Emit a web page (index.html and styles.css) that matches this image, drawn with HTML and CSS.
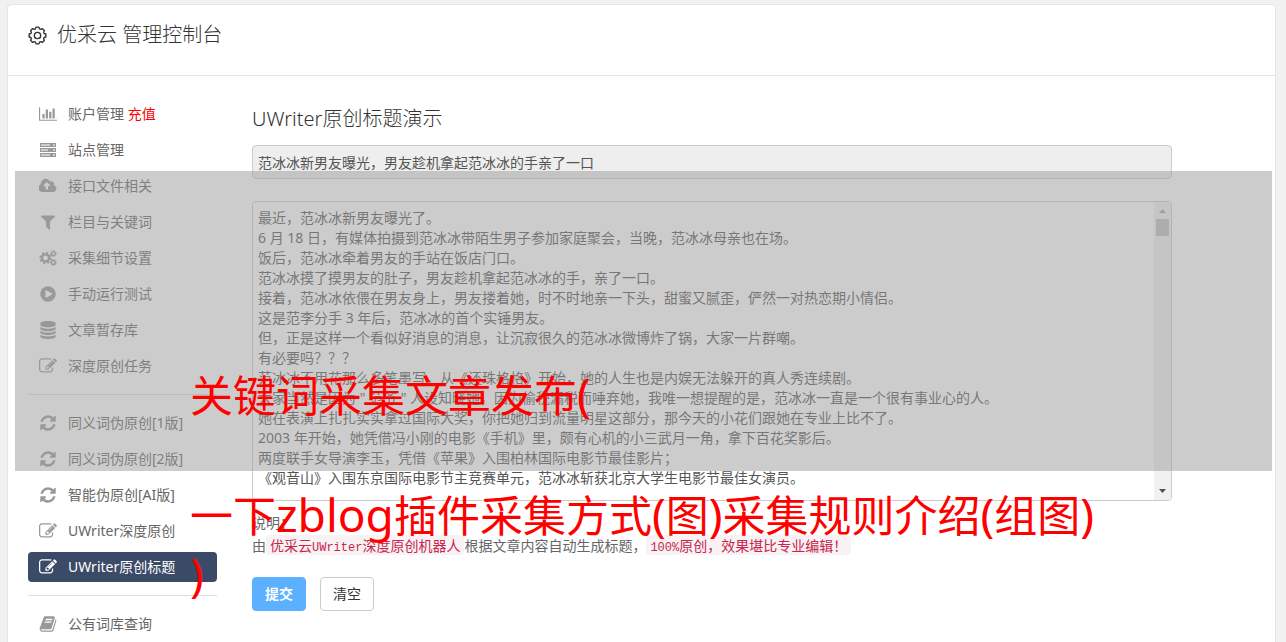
FILE: index.html
```html
<!DOCTYPE html>
<html lang="zh-CN">
<head>
    <meta charset="UTF-8">
    <meta name="viewport" content="width=device-width, initial-scale=1.0">
    <title>优采云 管理控制台</title>
    <link rel="stylesheet" href="styles.css">
</head>
<body>
    <!-- Iconos compartidos -->
    <svg class="sprite" aria-hidden="true">
        <symbol id="gear" viewBox="-9 -9 18 18">
            <path d="M7.9-1.4L7.9 1.4 6.3 1.9 5.8 3.1 6.55 4.6 4.6 6.55 3.1 5.8 1.9 6.3 1.4 7.9-1.4 7.9-1.9 6.3-3.1 5.8-4.6 6.55-6.55 4.6-5.8 3.1-6.3 1.9-7.9 1.4-7.9-1.4-6.3-1.9-5.8-3.1-6.55-4.6-4.6-6.55-3.1-5.8-1.9-6.3-1.4-7.9 1.4-7.9 1.9-6.3 3.1-5.8 4.6-6.55 6.55-4.6 5.8-3.1 6.3-1.9Z" fill="none" stroke="currentColor" stroke-width="1.3" stroke-linejoin="round"/>
            <circle r="3" fill="none" stroke="currentColor" stroke-width="1.3"/>
        </symbol>
        <symbol id="chart" viewBox="0 0 2048 1792"><path d="M640 896v512h-256v-512h256zm384-512v1024h-256v-1024h256zm1024 1152v128h-2048v-1536h128v1408h1920zm-640-896v768h-256v-768h256zm384-384v1152h-256v-1152h256z"/></symbol>
        <symbol id="server" viewBox="0 0 18 18">
            <path fill-rule="evenodd" d="M1 2h16v4H1zM2 3.500h9v1H2zM14 3.500h2v1h-2zM1 7h16v4H1zM2 8.500h7v1H2zM14 8.500h2v1h-2zM1 12h16v4H1zM2 13.500h9v1H2zM14 13.500h2v1h-2z"/>
        </symbol>
        <symbol id="cloud" viewBox="0 0 1920 1792"><path d="M1216 864q0-14-9-23l-352-352q-9-9-23-9t-23 9l-351 351q-10 12-10 24 0 14 9 23t23 9h224v352q0 13 9.500 22.500t22.500 9.500h192q13 0 22.500-9.500t9.500-22.500v-352h224q13 0 22.500-9.500t9.500-22.500zm640 288q0 159-112.500 271.500t-271.500 112.500h-1088q-185 0-316.500-131.500t-131.500-316.500q0-130 70-240t188-165q-2-30-2-43 0-212 150-362t362-150q156 0 285.500 87t188.500 231q71-62 166-62 106 0 181 75t75 181q0 76-41 138 130 31 213.500 135.500t83.500 238.500z"/></symbol>
        <symbol id="filter" viewBox="0 0 1792 1792"><path d="M1595 295q17 41-14 70l-493 493v742q0 42-39 59-13 5-25 5-27 0-45-19l-256-256q-19-19-19-45v-486l-493-493q-31-29-14-70 17-39 59-39h1280q42 0 59 39z"/></symbol>
        <symbol id="cogs" viewBox="0 0 18 16">
            <g fill="none" stroke="currentColor">
                <circle cx="6.500" cy="8" r="3.600" stroke-width="2.400"/>
                <circle cx="6.500" cy="8" r="5.400" stroke-width="1.600" stroke-dasharray="2.120 2.120"/>
                <circle cx="14.400" cy="3.600" r="1.900" stroke-width="1.300"/>
                <circle cx="14.400" cy="3.600" r="2.900" stroke-width="1" stroke-dasharray="1.140 1.140"/>
                <circle cx="14.400" cy="12.400" r="1.900" stroke-width="1.300"/>
                <circle cx="14.400" cy="12.400" r="2.900" stroke-width="1" stroke-dasharray="1.140 1.140"/>
            </g>
        </symbol>
        <symbol id="play" viewBox="0 0 1792 1792"><path d="M896 128q209 0 385.500 103t279.500 279.500 103 385.500-103 385.500-279.500 279.500-385.500 103-385.500-103-279.500-279.500-103-385.500 103-385.500 279.500-279.500 385.500-103zm384 823q32-18 32-55t-32-55l-544-320q-31-19-64-1-32 19-32 56v640q0 37 32 56 16 8 32 8 17 0 32-9z"/></symbol>
        <symbol id="database" viewBox="0 0 1792 1792"><path d="M896 768q237 0 443-43t325-127v170q0 69-103 128t-280 93.500-385 34.500-385-34.500-280-93.500-103-128v-170q119 84 325 127t443 43zm0 768q237 0 443-43t325-127v170q0 69-103 128t-280 93.500-385 34.500-385-34.500-280-93.500-103-128v-170q119 84 325 127t443 43zm0-384q237 0 443-43t325-127v170q0 69-103 128t-280 93.500-385 34.500-385-34.500-280-93.500-103-128v-170q119 84 325 127t443 43zm0-1152q208 0 385 34.500t280 93.500 103 128v128q0 69-103 128t-280 93.500-385 34.500-385-34.500-280-93.500-103-128v-128q0-69 103-128t280-93.500 385-34.500z"/></symbol>
        <symbol id="edit" viewBox="0 0 1792 1792"><path d="M888 1184l116-116-152-152-116 116v56h96v96h56zm440-720q-16-16-33 1l-350 350q-17 17-1 33t33-1l350-350q17-17 1-33zm80 594v190q0 119-84.500 203.500t-203.500 84.500h-832q-119 0-203.500-84.500t-84.500-203.500v-832q0-119 84.500-203.500t203.500-84.500h832q63 0 117 25 15 7 18 23 3 17-9 29l-49 49q-14 14-32 8-23-6-45-6h-832q-66 0-113 47t-47 113v832q0 66 47 113t113 47h832q66 0 113-47t47-113v-126q0-13 9-22l64-64q15-15 35-7t20 29zm-96-738l288 288-672 672h-288v-288zm444 132l-92 92-288-288 92-92q28-28 68-28t68 28l152 152q28 28 28 68t-28 68z"/></symbol>
        <symbol id="refresh" viewBox="0 0 1792 1792"><path d="M1639 1056q0 5-1 7-64 268-268 434.500t-478 166.500q-146 0-282.500-55t-243.500-157l-129 129q-19 19-45 19t-45-19-19-45v-448q0-26 19-45t45-19h448q26 0 45 19t19 45-19 45l-137 137q71 66 161 102t187 36q134 0 250-65t186-179q11-17 53-117 8-23 30-23h192q13 0 22.500 9.500t9.500 22.500zm25-800v448q0 26-19 45t-45 19h-448q-26 0-45-19t-19-45 19-45l138-138q-148-137-349-137-134 0-250 65t-186 179q-11 17-53 117-8 23-30 23h-199q-13 0-22.500-9.500t-9.500-22.500v-7q65-268 270-434.500t480-166.500q146 0 284 55.500t245 156.500l130-129q19-19 45-19t45 19 19 45z"/></symbol>
        <symbol id="book" viewBox="0 0 1792 1792"><path d="M1703 478q40 57 18 129l-275 906q-19 64-76.500 107.500t-122.500 43.500h-923q-77 0-148.500-53.500t-99.500-131.500q-24-67-2-127 0-4 3-27t4-37q1-8-3-21.500t-3-19.500q2-11 8-21t16.500-23.500 16.500-23.500q23-38 45-91.500t30-91.500q3-10 .5-30t-.5-28q3-11 17-28t17-23q21-36 42-92t25-90q1-9-2.500-32t.5-28q4-13 22-30.500t22-22.500q19-26 42.500-84.500t27.500-96.500q1-8-3-25.500t-2-26.500q2-8 9-18t18-23 17-21q8-12 16.500-30.500t15-35 16-36 19.500-32 26.500-23.500 36-11.500 47.500 5.500l-1 3q38-9 51-9h761q74 0 114 56t18 130l-274 906q-36 119-71.500 153.500t-128.500 34.500h-869q-27 0-38 15-11 16-1 43 24 70 144 70h923q29 0 56-15.500t35-41.500l300-987q7-22 5-57 38 15 59 43zm-1064 2q-4 13 2 22.500t20 9.500h608q13 0 25.500-9.500t16.500-22.500l21-64q4-13-2-22.500t-20-9.500h-608q-13 0-25.500 9.500t-16.500 22.500zm-83 256q-4 13 2 22.500t20 9.500h608q13 0 25.500-9.500t16.500-22.500l21-64q4-13-2-22.500t-20-9.500h-608q-13 0-25.500 9.500t-16.500 22.500z"/></symbol>
    </svg>

    <div class="panel">
        <header>
            <svg class="gear"><use href="#gear"/></svg>
            <h1>优采云 管理控制台</h1>
        </header>

        <div class="content">
            <nav>
                <a href="#"><svg><use href="#chart"/></svg><span>账户管理 <em>充值</em></span></a>
                <a href="#"><svg><use href="#server"/></svg>站点管理</a>
                <a href="#"><svg><use href="#cloud"/></svg>接口文件相关</a>
                <a href="#"><svg><use href="#filter"/></svg>栏目与关键词</a>
                <a href="#"><svg><use href="#cogs"/></svg>采集细节设置</a>
                <a href="#"><svg><use href="#play"/></svg>手动运行测试</a>
                <a href="#"><svg><use href="#database"/></svg>文章暂存库</a>
                <a href="#"><svg><use href="#edit"/></svg>深度原创任务</a>
                <hr>
                <a href="#"><svg><use href="#refresh"/></svg>同义词伪原创[1版]</a>
                <a href="#"><svg><use href="#refresh"/></svg>同义词伪原创[2版]</a>
                <a href="#"><svg><use href="#refresh"/></svg>智能伪原创[AI版]</a>
                <a href="#"><svg><use href="#edit"/></svg>UWriter深度原创</a>
                <a href="#" class="active"><svg><use href="#edit"/></svg>UWriter原创标题</a>
                <hr>
                <a href="#"><svg><use href="#book"/></svg>公有词库查询</a>
            </nav>

            <main>
                <h2><label for="titleInput">UWriter原创标题演示</label></h2>
                <input type="text" id="titleInput" value="范冰冰新男友曝光，男友趁机拿起范冰冰的手亲了一口" readonly>
                <div class="article">
                    <textarea id="articleText" aria-label="文章内容">最近，范冰冰新男友曝光了。
6 月 18 日，有媒体拍摄到范冰冰带陌生男子参加家庭聚会，当晚，范冰冰母亲也在场。
饭后，范冰冰牵着男友的手站在饭店门口。
范冰冰摸了摸男友的肚子，男友趁机拿起范冰冰的手，亲了一口。
接着，范冰冰依偎在男友身上，男友搂着她，时不时地亲一下头，甜蜜又腻歪，俨然一对热恋期小情侣。
这是范李分手 3 年后，范冰冰的首个实锤男友。
但，正是这样一个看似好消息的消息，让沉寂很久的范冰冰微博炸了锅，大家一片群嘲。
有必要吗？？？
范冰冰不用花那么多笔墨写，从《还珠格格》开始，她的人生也是内娱无法躲开的真人秀连续剧。
大家当然是因为 " 范爷 " 人设知晓她，因为偷税漏税而唾弃她，我唯一想提醒的是，范冰冰一直是一个很有事业心的人。
她在表演上扎扎实实拿过国际大奖，你把她归到流量明星这部分，那今天的小花们跟她在专业上比不了。
2003 年开始，她凭借冯小刚的电影《手机》里，颇有心机的小三武月一角，拿下百花奖影后。
两度联手女导演李玉，凭借《苹果》入围柏林国际电影节最佳影片；
《观音山》入围东京国际电影节主竞赛单元，范冰冰斩获北京大学生电影节最佳女演员。</textarea>
                    <div class="scrollbar">
                        <svg viewBox="0 0 7 4"><path d="M0 4L3.500 0 7 4z"/></svg>
                        <div class="thumb"></div>
                        <svg class="down" viewBox="0 0 7 4"><path d="M0 0L3.500 4 7 0z"/></svg>
                    </div>
                </div>
                <div class="help">
                    <p>说明：</p>
                    <p>由<code>优采云<span>UWriter</span>深度原创机器人</code>根据文章内容自动生成标题，<code><span>100%</span>原创，效果堪比专业编辑！</code></p>
                </div>
                <div class="buttons">
                    <button type="button" class="submit">提交</button>
                    <button type="button">清空</button>
                </div>
            </main>
        </div>
    </div>

    <!-- Banda gris y titular rojo por encima del panel -->
    <div class="band"></div>
    <div class="headline">
        <p class="first">关键词采集文章发布<span>(</span></p>
        <p>一下<span>zblog</span>插件采集方式<span>(</span>图<span>)</span>采集规则介绍<span>(</span>组图<span>)</span></p>
        <p><span>)</span></p>
    </div>
</body>
</html>
```

FILE: styles.css
```css
/* styles.css */

* {
    box-sizing: border-box;
}

body {
    font-family: "Noto Sans", "Noto Sans CJK SC", sans-serif;
    font-size: 14px;
    line-height: 20px;
    color: #666;
    background-color: #f1f1f1;
    margin: 0;
    padding: 4px 10px 0 7px;
    position: relative;
}

h1, h2, p {
    margin: 0;
    font-weight: 300;
}

svg {
    fill: currentColor;
}

.sprite {
    position: absolute;
    width: 0;
    height: 0;
}

.panel {
    min-height: calc(100vh - 4px);
    background-color: #fff;
    border: 1px solid #e5e5e5;
    border-bottom: none;
    border-radius: 4px 4px 0 0;
}

header {
    display: flex;
    align-items: center;
    gap: 10px;
    height: 71px;
    padding: 0 20px 10px;
    border-bottom: 1px solid #e5e5e5;
    color: #333;
}

header .gear {
    width: 19px;
    height: 19px;
}

h1 {
    font-size: 20px;
    line-height: 30px;
}

.content {
    display: flex;
    gap: 35px;
    padding: 23px 20px 0;
}

/* Menú lateral */
nav {
    display: flex;
    flex-direction: column;
    flex: none;
    gap: 6px;
    width: 189px;
}

nav a {
    display: flex;
    align-items: center;
    gap: 11px;
    height: 30px;
    padding: 0 11px;
    border-radius: 4px;
    color: #666;
    text-decoration: none;
}

nav svg {
    width: 18px;
    height: 18px;
    color: #999;
}

nav em {
    color: #f00;
    font-style: normal;
}

nav hr {
    width: 100%;
    margin: 7px 0;
    border: none;
    border-top: 1px solid #ddd;
}

nav .active {
    background-color: #3b4a66;
    color: #fff;
}

nav .active svg {
    color: #fff;
}

/* Formulario */
main {
    flex: 1;
    max-width: 920px;
}

h2 {
    font-size: 20px;
    line-height: 40px;
    color: #333;
    margin-bottom: 6px;
}

input, textarea {
    display: block;
    width: 100%;
    font: inherit;
    color: #555;
    border: 1px solid #ccc;
    border-radius: 4px;
}

input {
    height: 34px;
    padding: 0 5px;
    background-color: #eee;
    margin-bottom: 22px;
}

.article {
    position: relative;
    margin-bottom: 10px;
}

textarea {
    height: 300px;
    padding: 6px 22px 6px 5px;
    resize: none;
    overflow: hidden;
}

.scrollbar {
    position: absolute;
    top: 1px;
    right: 1px;
    bottom: 1px;
    width: 17px;
    display: flex;
    flex-direction: column;
    align-items: center;
    gap: 6px;
    padding: 7px 0;
    background-color: #f1f1f1;
    border-radius: 0 3px 3px 0;
}

.scrollbar svg {
    width: 7px;
    height: 4px;
    color: #a3a3a3;
}

.scrollbar .down {
    margin-top: auto;
    color: #505050;
}

.thumb {
    width: 13px;
    height: 17px;
    background-color: #c1c1c1;
}

.help {
    line-height: 23px;
    margin-bottom: 20px;
}

.help p {
    font-weight: normal;
}

code {
    font-family: "Noto Sans CJK SC", sans-serif;
    font-size: 14px;
    line-height: 14px;
    color: #c7254e;
    background-color: #f9f2f4;
    border-radius: 4px;
    padding: 0 4px;
}

code span {
    font-family: "Liberation Mono", monospace;
    font-size: 12px;
}

.buttons {
    display: flex;
    gap: 14px;
}

button {
    width: 54px;
    height: 34px;
    padding: 0;
    font: inherit;
    color: #333;
    background-color: #fff;
    border: 1px solid #ccc;
    border-radius: 4px;
    cursor: pointer;
}

button.submit {
    color: #fff;
    font-weight: bold;
    background-color: #5bb0ff;
    border-color: #5bb0ff;
}

/* Capas superpuestas */
.band {
    position: absolute;
    top: 171px;
    left: 15px;
    right: 14px;
    height: 300px;
    background-color: rgba(153, 153, 153, 0.5);
    pointer-events: none;
}

.headline {
    position: absolute;
    top: 364px;
    left: 190px;
    font-size: 43px;
    line-height: 60px;
    color: #f00;
    white-space: nowrap;
    pointer-events: none;
}

.headline p {
    height: 60px;
    font-weight: normal;
}

.headline .first {
    margin-bottom: 60px;
}

.headline span {
    font-size: 46px;
}
```
